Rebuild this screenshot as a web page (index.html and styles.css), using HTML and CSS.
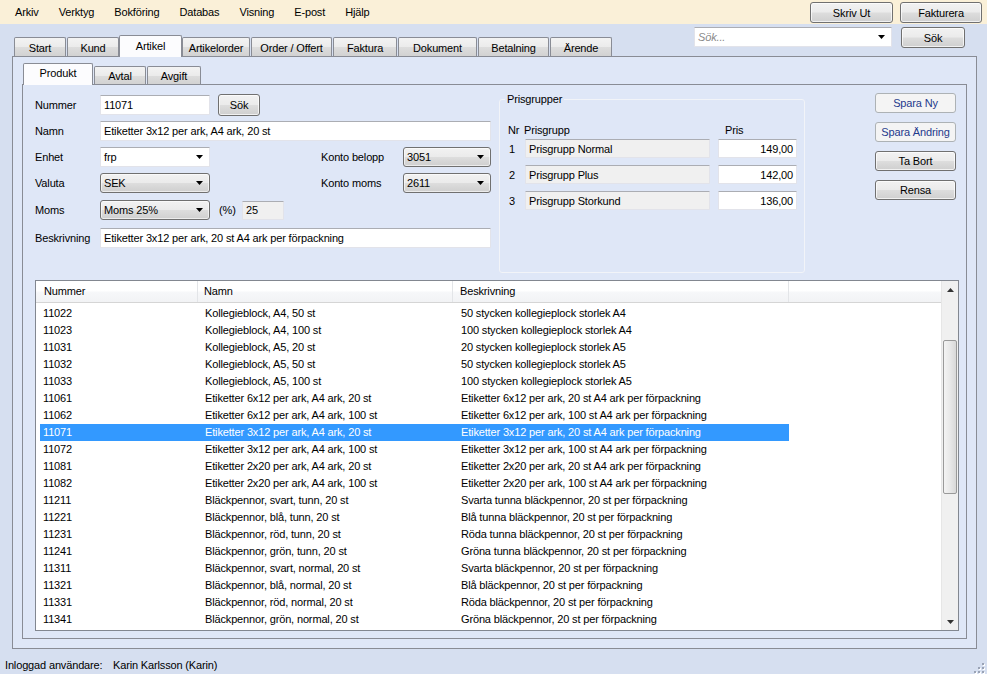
FILE: index.html
```html
<!DOCTYPE html>
<html lang="sv">
<head>
<meta charset="utf-8">
<title>Artikel</title>
<link rel="stylesheet" href="styles.css">
</head>
<body>
<div class="menubar">
  <nav class="menu">
    <span>Arkiv</span><span>Verktyg</span><span>Bokföring</span><span>Databas</span><span>Visning</span><span>E-post</span><span>Hjälp</span>
  </nav>
  <div class="topbtns">
    <div class="btn w-skriv">Skriv Ut</div>
    <div class="btn w-fakt">Fakturera</div>
  </div>
</div>

<div class="tabrow">
  <div class="tabs">
    <div class="tab t-start">Start</div>
    <div class="tab t-kund">Kund</div>
    <div class="tab t-artikel sel">Artikel</div>
    <div class="tab t-aorder">Artikelorder</div>
    <div class="tab t-order">Order / Offert</div>
    <div class="tab t-faktura">Faktura</div>
    <div class="tab t-dok">Dokument</div>
    <div class="tab t-betal">Betalning</div>
    <div class="tab t-arende">Ärende</div>
  </div>
  <div class="search">
    <div class="combo white w-search"><span class="ph">Sök...</span><svg class="arr" width="7" height="4" viewBox="0 0 7 4"><polygon points="0,0 7,0 3.5,4" fill="#000"/></svg></div>
    <div class="btn w-sok">Sök</div>
  </div>
</div>

<div class="tabpage">
  <div class="subtabs">
    <div class="stab s-prod sel">Produkt</div>
    <div class="stab s-avtal">Avtal</div>
    <div class="stab s-avgift">Avgift</div>
  </div>
  <div class="subpage">
    <div class="form">
      <div class="fields">
        <div class="lbl">Nummer</div>
        <div class="tb">11071</div>
        <div class="cell-sok"><div class="btn w-sok2">Sök</div></div>
        <div></div><div></div>

        <div class="lbl">Namn</div>
        <div class="tb span4">Etiketter 3x12 per ark, A4 ark, 20 st</div>

        <div class="lbl">Enhet</div>
        <div class="combo white"><span>frp</span><svg class="arr" width="7" height="4" viewBox="0 0 7 4"><polygon points="0,0 7,0 3.5,4" fill="#000"/></svg></div>
        <div></div>
        <div class="lbl">Konto belopp</div>
        <div class="combo gray"><span>3051</span><svg class="arr" width="7" height="4" viewBox="0 0 7 4"><polygon points="0,0 7,0 3.5,4" fill="#000"/></svg></div>

        <div class="lbl">Valuta</div>
        <div class="combo gray"><span>SEK</span><svg class="arr" width="7" height="4" viewBox="0 0 7 4"><polygon points="0,0 7,0 3.5,4" fill="#000"/></svg></div>
        <div></div>
        <div class="lbl">Konto moms</div>
        <div class="combo gray"><span>2611</span><svg class="arr" width="7" height="4" viewBox="0 0 7 4"><polygon points="0,0 7,0 3.5,4" fill="#000"/></svg></div>

        <div class="lbl">Moms</div>
        <div class="combo gray"><span>Moms 25%</span><svg class="arr" width="7" height="4" viewBox="0 0 7 4"><polygon points="0,0 7,0 3.5,4" fill="#000"/></svg></div>
        <div class="pct"><span class="pct-l">(%)</span><div class="tb ro w-pct">25</div></div>
        <div></div><div></div>

        <div class="lbl">Beskrivning</div>
        <div class="tb span4">Etiketter 3x12 per ark, 20 st A4 ark per förpackning</div>
      </div>

      <fieldset class="group">
        <legend>Prisgrupper</legend>
        <div class="pg-head">
          <span class="pg-h-nr">Nr</span><span class="pg-h-grp">Prisgrupp</span><span class="pg-h-pris">Pris</span>
        </div>
        <div class="pg">
          <div class="pg-n">1</div><div class="tb ro">Prisgrupp Normal</div><div></div><div class="tb num">149,00</div>
          <div class="pg-n">2</div><div class="tb ro">Prisgrupp Plus</div><div></div><div class="tb num">142,00</div>
          <div class="pg-n">3</div><div class="tb ro">Prisgrupp Storkund</div><div></div><div class="tb num">136,00</div>
        </div>
      </fieldset>

      <div class="actions">
        <div class="btn dis">Spara Ny</div>
        <div class="btn dis">Spara Ändring</div>
        <div class="btn">Ta Bort</div>
        <div class="btn">Rensa</div>
      </div>
    </div>

    <div class="grid">
      <div class="grid-main">
        <div class="gh">
          <div class="c1">Nummer</div><div class="c2">Namn</div><div class="c3">Beskrivning</div><div class="c4"></div>
        </div>
        <div class="rows">
          <div class="row"><div class="c1">11022</div><div class="c2">Kollegieblock, A4, 50 st</div><div class="c3">50 stycken kollegieplock storlek A4</div></div>
          <div class="row"><div class="c1">11023</div><div class="c2">Kollegieblock, A4, 100 st</div><div class="c3">100 stycken kollegieplock storlek A4</div></div>
          <div class="row"><div class="c1">11031</div><div class="c2">Kollegieblock, A5, 20 st</div><div class="c3">20 stycken kollegieplock storlek A5</div></div>
          <div class="row"><div class="c1">11032</div><div class="c2">Kollegieblock, A5, 50 st</div><div class="c3">50 stycken kollegieplock storlek A5</div></div>
          <div class="row"><div class="c1">11033</div><div class="c2">Kollegieblock, A5, 100 st</div><div class="c3">100 stycken kollegieplock storlek A5</div></div>
          <div class="row"><div class="c1">11061</div><div class="c2">Etiketter 6x12 per ark, A4 ark, 20 st</div><div class="c3">Etiketter 6x12 per ark, 20 st A4 ark per förpackning</div></div>
          <div class="row"><div class="c1">11062</div><div class="c2">Etiketter 6x12 per ark, A4 ark, 100 st</div><div class="c3">Etiketter 6x12 per ark, 100 st A4 ark per förpackning</div></div>
          <div class="row sel"><div class="c1">11071</div><div class="c2">Etiketter 3x12 per ark, A4 ark, 20 st</div><div class="c3">Etiketter 3x12 per ark, 20 st A4 ark per förpackning</div></div>
          <div class="row"><div class="c1">11072</div><div class="c2">Etiketter 3x12 per ark, A4 ark, 100 st</div><div class="c3">Etiketter 3x12 per ark, 100 st A4 ark per förpackning</div></div>
          <div class="row"><div class="c1">11081</div><div class="c2">Etiketter 2x20 per ark, A4 ark, 20 st</div><div class="c3">Etiketter 2x20 per ark, 20 st A4 ark per förpackning</div></div>
          <div class="row"><div class="c1">11082</div><div class="c2">Etiketter 2x20 per ark, A4 ark, 100 st</div><div class="c3">Etiketter 2x20 per ark, 100 st A4 ark per förpackning</div></div>
          <div class="row"><div class="c1">11211</div><div class="c2">Bläckpennor, svart, tunn, 20 st</div><div class="c3">Svarta tunna bläckpennor, 20 st per förpackning</div></div>
          <div class="row"><div class="c1">11221</div><div class="c2">Bläckpennor, blå, tunn, 20 st</div><div class="c3">Blå tunna bläckpennor, 20 st per förpackning</div></div>
          <div class="row"><div class="c1">11231</div><div class="c2">Bläckpennor, röd, tunn, 20 st</div><div class="c3">Röda tunna bläckpennor, 20 st per förpackning</div></div>
          <div class="row"><div class="c1">11241</div><div class="c2">Bläckpennor, grön, tunn, 20 st</div><div class="c3">Gröna tunna bläckpennor, 20 st per förpackning</div></div>
          <div class="row"><div class="c1">11311</div><div class="c2">Bläckpennor, svart, normal, 20 st</div><div class="c3">Svarta bläckpennor, 20 st per förpackning</div></div>
          <div class="row"><div class="c1">11321</div><div class="c2">Bläckpennor, blå, normal, 20 st</div><div class="c3">Blå bläckpennor, 20 st per förpackning</div></div>
          <div class="row"><div class="c1">11331</div><div class="c2">Bläckpennor, röd, normal, 20 st</div><div class="c3">Röda bläckpennor, 20 st per förpackning</div></div>
          <div class="row"><div class="c1">11341</div><div class="c2">Bläckpennor, grön, normal, 20 st</div><div class="c3">Gröna bläckpennor, 20 st per förpackning</div></div>
        </div>
      </div>
      <div class="vscroll">
        <div class="sb-btn"><svg width="7" height="4" viewBox="0 0 7 4"><polygon points="3.5,0 7,4 0,4" fill="#333"/></svg></div>
        <div class="sb-track">
          <div class="sb-thumb"></div>
        </div>
        <div class="sb-btn"><svg width="7" height="4" viewBox="0 0 7 4"><polygon points="0,0 7,0 3.5,4" fill="#333"/></svg></div>
      </div>
    </div>
  </div>
</div>

<div class="status">
  <span class="st-l">Inloggad användare:</span>
  <span class="st-v">Karin Karlsson (Karin)</span>
  <svg class="grip" width="12" height="12" viewBox="0 0 12 12">
    <g fill="#fff"><rect x="10" y="2" width="2" height="2"/><rect x="10" y="6" width="2" height="2"/><rect x="6" y="6" width="2" height="2"/><rect x="10" y="10" width="2" height="2"/><rect x="6" y="10" width="2" height="2"/><rect x="2" y="10" width="2" height="2"/></g>
    <g fill="#9aa3b5"><rect x="9" y="1" width="2" height="2"/><rect x="9" y="5" width="2" height="2"/><rect x="5" y="5" width="2" height="2"/><rect x="9" y="9" width="2" height="2"/><rect x="5" y="9" width="2" height="2"/><rect x="1" y="9" width="2" height="2"/></g>
  </svg>
</div>
</body>
</html>
```

FILE: styles.css
```css
* { box-sizing: border-box; }
html, body { margin: 0; padding: 0; }
body {
  width: 987px;
  height: 674px;
  overflow: hidden;
  background: #d6dff0;
  font-family: "Liberation Sans", Arial, sans-serif;
  font-size: 11px;
  letter-spacing: -0.15px;
  color: #000;
}

/* ---------- menu bar ---------- */
.menubar {
  height: 24px;
  background: #faf0d8;
  display: flex;
  align-items: flex-start;
}
.menu {
  display: flex;
  align-items: center;
  gap: 20px;
  height: 24px;
  padding-left: 15px;
}
.topbtns {
  margin-left: auto;
  display: flex;
  gap: 7px;
  padding: 2px 5px 0 0;
}

/* ---------- buttons ---------- */
.btn {
  height: 21px;
  border: 1px solid #707070;
  border-radius: 3px;
  background: linear-gradient(#f2f2f2 0%, #ebebeb 48%, #dddddd 52%, #cfcfcf 100%);
  box-shadow: inset 0 0 0 1px rgba(255,255,255,0.7);
  display: flex;
  align-items: center;
  justify-content: center;
  color: #000;
  white-space: nowrap;
}
.btn.dis {
  border-color: #adb2b5;
  background: #f4f4f4;
  box-shadow: none;
  color: #1f3a8c;
}
.w-skriv { width: 83px; }
.w-fakt { width: 82px; }
.w-sok { width: 64px; }
.w-sok2 { width: 42px; height: 22px; }

/* ---------- main tabs ---------- */
.tabrow {
  height: 32px;
  display: flex;
}
.tabs {
  display: flex;
  align-items: flex-end;
  margin-left: 14px;
}
.tab {
  height: 19px;
  margin-right: 1px;
  border: 1px solid #898c95;
  border-bottom: none;
  border-radius: 2px 2px 0 0;
  background: linear-gradient(#f3f3f3 0%, #ebebeb 50%, #dddddd 51%, #d2d2d2 100%);
  display: flex;
  align-items: center;
  justify-content: center;
  padding-top: 1px;
}
.tab.sel {
  position: relative;
  z-index: 1;
  height: 22px;
  margin-left: -1px;
  margin-right: 0;
  margin-bottom: -1px;
  background: #fcfcfe;
  padding-bottom: 3px;
}
.t-start { width: 52px; }
.t-kund { width: 52px; }
.t-artikel { width: 63px; }
.t-aorder { width: 68px; }
.t-order { width: 81px; }
.t-faktura { width: 64px; }
.t-dok { width: 79px; }
.t-betal { width: 71px; }
.t-arende { width: 62px; }

.search {
  margin-left: auto;
  margin-top: 3px;
  padding-right: 22px;
  display: flex;
  gap: 9px;
  align-items: flex-start;
}
.w-search { width: 198px; height: 21px; }
.ph { color: #8a8a8a; font-style: italic; }

/* ---------- inputs ---------- */
.tb {
  height: 20px;
  background: #fff;
  border: 1px solid #e2e3ea;
  border-top-color: #abadb3;
  border-radius: 1px;
  padding: 0 3px;
  display: flex;
  align-items: center;
  white-space: nowrap;
  overflow: hidden;
}
.tb.ro { background: #f0f0f0; }
.tb.num { justify-content: flex-end; }

.combo {
  height: 20px;
  display: flex;
  align-items: center;
  justify-content: space-between;
  padding: 0 6px 0 3px;
  white-space: nowrap;
}
.combo.white {
  background: #fff;
  border: 1px solid #e2e3ea;
  border-top-color: #abadb3;
}
.combo.gray {
  border: 1px solid #707070;
  border-radius: 3px;
  background: linear-gradient(#f2f2f2 0%, #ebebeb 48%, #dddddd 52%, #cfcfcf 100%);
  box-shadow: inset 0 0 0 1px rgba(255,255,255,0.6);
}
.arr { flex: none; }

/* ---------- tab page ---------- */
.tabpage {
  margin-left: 12px;
  width: 965px;
  height: 593px;
  border: 1px solid #898c95;
  background: #dfe7f7;
  padding: 0 9px 9px 9px;
  display: flex;
  flex-direction: column;
}
.subtabs {
  height: 27px;
  display: flex;
  align-items: flex-end;
  padding-left: 1px;
}
.stab {
  height: 18px;
  margin-right: 1px;
  border: 1px solid #898c95;
  border-bottom: none;
  border-radius: 2px 2px 0 0;
  background: linear-gradient(#f3f3f3 0%, #ebebeb 50%, #dddddd 51%, #d2d2d2 100%);
  display: flex;
  align-items: center;
  justify-content: center;
  padding-top: 1px;
}
.stab.sel {
  position: relative;
  z-index: 1;
  height: 22px;
  margin-bottom: -1px;
  background: #fcfcfe;
  padding-bottom: 4px;
}
.s-prod { width: 70px; }
.s-avtal { width: 52px; }
.s-avgift { width: 54px; }

.subpage {
  flex: 1;
  border: 1px solid #898c95;
  background: #dfe7f7;
  padding: 0 7px 0 12px;
}

/* ---------- form ---------- */
.form {
  height: 195px;
  display: flex;
  align-items: flex-start;
}
.fields {
  margin-top: 10px;
  width: 456px;
  display: grid;
  grid-template-columns: 65px 110px 111px 82px 88px;
  grid-template-rows: 26px 26px 26px 27px 28px 20px;
  align-items: start;
}
.lbl {
  height: 20px;
  line-height: 20px;
}
.span4 { grid-column: 2 / span 4; }
.cell-sok { padding-left: 8px; margin-top: -1px; }
.pct {
  display: flex;
  align-items: center;
  height: 20px;
  padding-left: 9px;
}
.pct-l { width: 23px; }
.w-pct { width: 42px; height: 19px; background: #f0f0f0; }

.group {
  margin: 8px 0 0 8px;
  width: 306px;
  height: 180px;
  border: 1px solid #f2f4f8;
  border-radius: 3px;
  padding: 16px 0 0 8px;
}
.group legend {
  padding: 0 2px;
  margin-left: -3px;
  line-height: 13px;
}
.pg-head {
  height: 16px;
  line-height: 16px;
  display: flex;
}
.pg-h-nr { width: 16px; }
.pg-h-grp { width: 201px; }
.pg-h-pris { }
.pg {
  margin-top: 1px;
  display: grid;
  grid-template-columns: 17px 185px 8px 79px;
  grid-template-rows: 19px 19px 19px;
  row-gap: 7px;
  align-items: center;
}
.pg-n { padding-left: 1px; }
.pg .tb { height: 19px; }

.actions {
  margin: 8px 0 0 70px;
  width: 81px;
  display: flex;
  flex-direction: column;
  gap: 9px;
}
.actions .btn { height: 20px; }

/* ---------- list grid ---------- */
.grid {
  height: 351px;
  border: 1px solid #828790;
  background: #fff;
  display: flex;
}
.grid-main { flex: 1; overflow: hidden; }
.gh {
  height: 22px;
  display: flex;
  border-bottom: 1px solid #d5d5d5;
  background: linear-gradient(#ffffff 0%, #ffffff 45%, #f6f7f9 55%, #f2f3f5 100%);
}
.gh > div {
  height: 21px;
  line-height: 21px;
  border-right: 1px solid #e3e5e8;
}
.gh .c1 { width: 162px; padding-left: 8px; }
.gh .c2 { width: 255px; padding-left: 6px; }
.gh .c3 { width: 336px; padding-left: 7px; }
.gh .c4 { flex: 1; border-right: none; }

.rows { padding: 2px 0 0 4px; }
.row {
  height: 17px;
  line-height: 17px;
  display: flex;
  white-space: nowrap;
}
.row .c1 { width: 158px; padding-left: 3px; }
.row .c2 { width: 255px; padding-left: 7px; }
.row .c3 { width: 336px; padding-left: 8px; }
.row.sel { width: 749px; background: #3399ff; color: #fff; }

.vscroll {
  width: 17px;
  display: flex;
  flex-direction: column;
  background: #f0f0f0;
  border-left: 1px solid #e6e6e6;
}
.sb-btn {
  height: 17px;
  display: flex;
  align-items: center;
  justify-content: center;
}
.sb-track {
  flex: 1;
  padding-top: 42px;
}
.sb-thumb {
  margin: 0 1px;
  height: 154px;
  border: 1px solid #999;
  border-radius: 2px;
  background: linear-gradient(90deg, #f3f3f3 0%, #e8e8e8 50%, #d8d8d8 100%);
}

/* ---------- status ---------- */
.status {
  margin-top: 6px;
  height: 20px;
  display: flex;
  align-items: center;
  padding-left: 5px;
}
.st-l { width: 108px; }
.grip { margin-left: auto; margin-right: 2px; align-self: flex-end; margin-bottom: 1px; }
```
